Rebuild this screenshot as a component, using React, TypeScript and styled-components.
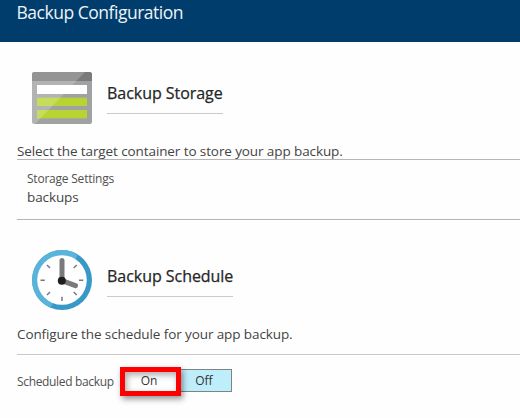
import React from "react";
import styled, { createGlobalStyle } from "styled-components";

const GlobalStyle = createGlobalStyle`
  * { box-sizing: border-box; }
  body {
    margin: 0;
    background: #fefefe;
    color: #444;
    font-family: "Open Sans", "Noto Sans", sans-serif;
    overflow: hidden;
  }
`;

const Blade = styled.main`
  width: 520px;
  height: 418px;
  display: flex;
  flex-direction: column;
  overflow: hidden;
`;

const Header = styled.header`
  height: 42px;
  flex: none;
  padding: 0 0 0 16.5px;
  background: #003c6c;
`;

const Title = styled.h1`
  margin: 0;
  font-size: 17.5px;
  line-height: 24px;
  font-weight: 400;
  letter-spacing: -0.48px;
  color: #eef3f7;
`;

const SectionHead = styled.div<{ $top: number; $height: number }>`
  display: flex;
  flex: none;
  gap: 15px;
  margin: ${(p) => p.$top}px 0 0 32px;
  height: ${(p) => p.$height}px;

  svg { display: block; flex: none; }
`;

const Heading = styled.h2<{ $offset: number; $width: number }>`
  margin: ${(p) => p.$offset}px 0 0;
  width: ${(p) => p.$width}px;
  height: 33px;
  border-bottom: 1px solid #cacaca;
  font-size: 16px;
  line-height: 24px;
  font-weight: 400;
  letter-spacing: -0.04px;
  white-space: nowrap;
  color: #262626;
  -webkit-text-stroke: 0.25px #262626;
`;

const Description = styled.p<{ $top: number; $height: number }>`
  flex: none;
  margin: ${(p) => p.$top}px 0 0 17px;
  height: ${(p) => p.$height}px;
  font-size: 13.5px;
  line-height: 18px;
  letter-spacing: -0.1px;
  white-space: nowrap;
`;

const StorageRow = styled.div`
  flex: none;
  height: 61px;
  margin-left: 17px;
  padding: 10px 0 0 10px;
  border-top: 1px solid #b5b5b5;
  border-bottom: 1px solid #b5b5b5;
`;

const Label = styled.div`
  font-size: 12px;
  line-height: 17px;
  letter-spacing: -0.22px;
  white-space: nowrap;
  color: #505050;
`;

const Value = styled.div`
  font-size: 13.5px;
  line-height: 20px;
  letter-spacing: -0.1px;
`;

const ScheduleRow = styled.div`
  flex: none;
  display: flex;
  margin-left: 17px;
  padding-top: 12px;
  border-top: 1px solid #c8c8c8;
`;

const ToggleLabel = styled(Label)`
  width: 103px;
  padding-top: 6px;
  letter-spacing: -0.34px;
`;

const Toggle = styled.div`
  display: flex;
  align-items: flex-start;
`;

const Option = styled.button<{ $highlighted?: boolean }>`
  display: flex;
  align-items: center;
  justify-content: center;
  padding: 0;
  font: 400 12px/17px "Open Sans", "Noto Sans", sans-serif;
  color: #333;
  border-radius: 0;
  ${(p) =>
    p.$highlighted
      ? `
    position: relative;
    z-index: 1;
    width: 61px;
    height: 29px;
    padding: 0 3px 2px 0;
    background: #fefefe;
    border: 5px solid #fe0000;
    box-shadow: 2px 3px 6px rgba(0, 0, 0, 0.42), inset 2px 3px 6px rgba(0, 0, 0, 0.32);
  `
      : `
    width: 52px;
    height: 23px;
    margin: 2px 0 0 -1px;
    padding-right: 4px;
    background: #bfeefb;
    border: 1px solid #7d8486;
  `}
`;

function StorageIcon() {
  return (
    <svg width="60" height="52" viewBox="0 0 60 52" aria-hidden="true">
      <defs>
        <clipPath id="storage-body">
          <rect width="60" height="52" rx="2.5" />
        </clipPath>
      </defs>
      <g clipPath="url(#storage-body)">
        <rect width="60" height="52" fill="#a0a1a2" />
        <rect width="60" height="9" fill="#7a7a7a" />
        <rect x="5" y="13" width="50" height="9" fill="#fff" />
        <rect x="5" y="25.7" width="50" height="8.3" fill="#b8d432" />
        <rect x="5" y="38" width="50" height="8.3" fill="#b8d432" />
        <path d="M0 0H53L3 52H0Z" fill="#fff" fillOpacity="0.2" />
      </g>
    </svg>
  );
}

function ClockIcon() {
  return (
    <svg width="60" height="60" viewBox="0 0 60 60" aria-hidden="true">
      <circle cx="30" cy="30" r="30" fill="#3999c6" />
      <path d="M46 4.6A30 30 0 1 0 18.5 57.7Z" fill="#59b4d9" />
      <circle cx="30" cy="30" r="24.8" fill="#fff" />
      <g stroke="#7a7a7a" strokeWidth="1.5">
        <path d="M8.5 30.2h4.3M47 30.2h4.3M30 46.7v4.3M15 15l3 3M44.7 15l-3 3M15 45l3-3M44.7 45l-3-3" />
      </g>
      <path d="M30 10.5V30.7L43.5 35.6" fill="none" stroke="#7a7a7a" strokeWidth="5" strokeLinecap="round" />
      <circle cx="29.8" cy="30.8" r="4" fill="#1e1e1e" />
    </svg>
  );
}

export default function App() {
  return (
    <>
      <GlobalStyle />
      <Blade>
        <Header>
          <Title>Backup Configuration</Title>
        </Header>
        <SectionHead $top={30} $height={52}>
          <StorageIcon />
          <Heading $offset={9} $width={116}>Backup Storage</Heading>
        </SectionHead>
        <Description $top={18} $height={17}>
          Select the target container to store your app backup.
        </Description>
        <StorageRow>
          <Label>Storage Settings</Label>
          <Value>backups</Value>
        </StorageRow>
        <SectionHead $top={30} $height={60}>
          <ClockIcon />
          <Heading $offset={14} $width={126}>Backup Schedule</Heading>
        </SectionHead>
        <Description $top={15} $height={29}>
          Configure the schedule for your app backup.
        </Description>
        <ScheduleRow>
          <ToggleLabel>Scheduled backup</ToggleLabel>
          <Toggle>
            <Option type="button" $highlighted>On</Option>
            <Option type="button">Off</Option>
          </Toggle>
        </ScheduleRow>
      </Blade>
    </>
  );
}
